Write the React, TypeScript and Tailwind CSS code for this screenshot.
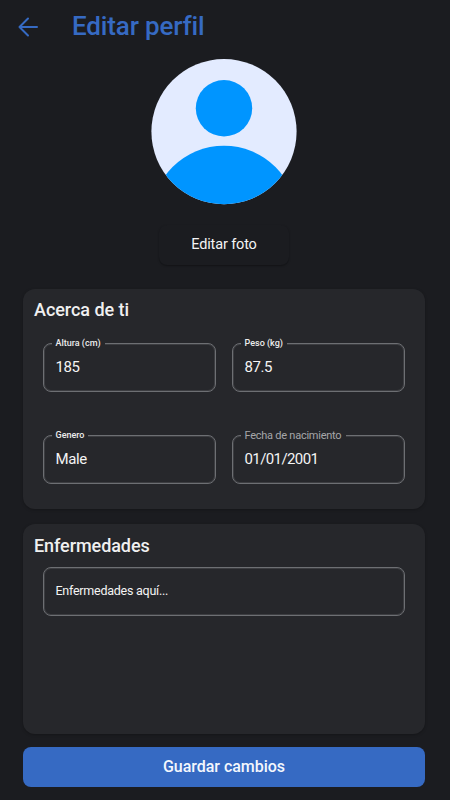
import type { ReactNode } from 'react'
import clsx from 'clsx'

type FieldProps = {
  label?: string
  labelClass?: string
  children: ReactNode
}

function Field({ label, labelClass, children }: FieldProps) {
  return (
    <div className="relative flex h-[49px] items-center rounded-[8px] border border-[#6d6f73] px-[11.5px] text-[#f4f4f4] shadow-[inset_0_0_0_1px_#3c3d41]">
      {label && (
        <span
          className={clsx(
            'absolute -top-[8px] left-[7.5px] h-[14px] whitespace-nowrap bg-[#26272b] pl-[4px]',
            labelClass ?? 'pr-[4px] text-[9px] leading-[15px] font-medium tracking-normal text-[#ececec]',
          )}
        >
          {label}
        </span>
      )}
      {children}
    </div>
  )
}

function Avatar() {
  return (
    <svg className="size-[146px]" viewBox="0 0 146 146">
      <defs>
        <clipPath id="avatar">
          <circle cx="73" cy="72.6" r="72.6" />
        </clipPath>
      </defs>
      <g clipPath="url(#avatar)">
        <rect width="146" height="146" fill="#e3ebff" />
        <circle cx="73" cy="49.3" r="28.2" fill="#0095ff" />
        <circle cx="73" cy="159.5" r="72.8" fill="#0095ff" />
      </g>
    </svg>
  )
}

export default function App() {
  return (
    <main className="flex h-[800px] w-[450px] flex-col overflow-hidden bg-[#1b1c20] font-['Roboto',sans-serif]">
      {/* Encabezado */}
      <header className="flex h-[53px] items-center pl-[18px] text-[#366ac3]">
        <button className="w-[54px]" aria-label="Volver">
          <svg className="size-[20px]" viewBox="0 0 20 20" fill="none" stroke="currentColor" strokeWidth="2" strokeLinecap="round" strokeLinejoin="round">
            <path d="M19 10H1.5M10 1.5L1.5 10L10 18.5" />
          </svg>
        </button>
        <h1 className="pb-px text-[26px] leading-[30px] font-medium tracking-[-0.15px]">Editar perfil</h1>
      </header>

      {/* Foto */}
      <section className="flex flex-col items-center pt-[5.5px] pr-[2px]">
        <Avatar />
        <button className="mt-[20px] h-[40px] w-[130px] rounded-[8px] bg-[#1b1c20] text-[14.5px] tracking-[-0.15px] text-[#f4f4f4] shadow-[0_1px_2px_rgba(0,0,0,0.35)]">
          Editar foto
        </button>
      </section>

      {/* Datos personales */}
      <section className="mx-[23px] mt-[24px] h-[220px] w-[402px] shrink-0 rounded-[12px] bg-[#26272b] px-[11px] pt-[9px] shadow-[0_1px_3px_rgba(0,0,0,0.25)]">
        <h2 className="text-[18px] leading-[24px] font-medium tracking-[-0.05px] text-[#f0f0f0]">Acerca de ti</h2>
        <div className="mt-[21px] grid grid-cols-[173px_173px] gap-x-[16px] gap-y-[43px] pl-[9px] text-[15px] tracking-[-0.4px]">
          <Field label="Altura (cm)">185</Field>
          <Field label="Peso (kg)">87.5</Field>
          <Field label="Genero">Male</Field>
          <Field label="Fecha de nacimiento" labelClass="pr-[5px] text-[11px] leading-[16px] tracking-[-0.25px] text-[#a5a6a9]">
            <span className="tracking-[-0.6px]">01/01/2001</span>
          </Field>
        </div>
      </section>

      {/* Enfermedades */}
      <section className="mx-[23px] mt-[15.5px] h-[210px] w-[402px] shrink-0 rounded-[12px] bg-[#26272b] px-[11px] pt-[9.5px] shadow-[0_1px_3px_rgba(0,0,0,0.25)]">
        <h2 className="text-[18px] leading-[24px] font-medium tracking-[-0.07px] text-[#f0f0f0]">Enfermedades</h2>
        <div className="mt-[9px] ml-[9px] w-[362px] text-[12.5px] tracking-[-0.25px]">
          <Field>Enfermedades aquí...</Field>
        </div>
      </section>

      <button className="mx-[23px] mt-[12.5px] h-[40px] w-[402px] shrink-0 rounded-[8px] bg-[#366ac3] pt-px text-[16px] font-medium tracking-[-0.03px] text-[#f4f7fd]">
        Guardar cambios
      </button>
    </main>
  )
}
